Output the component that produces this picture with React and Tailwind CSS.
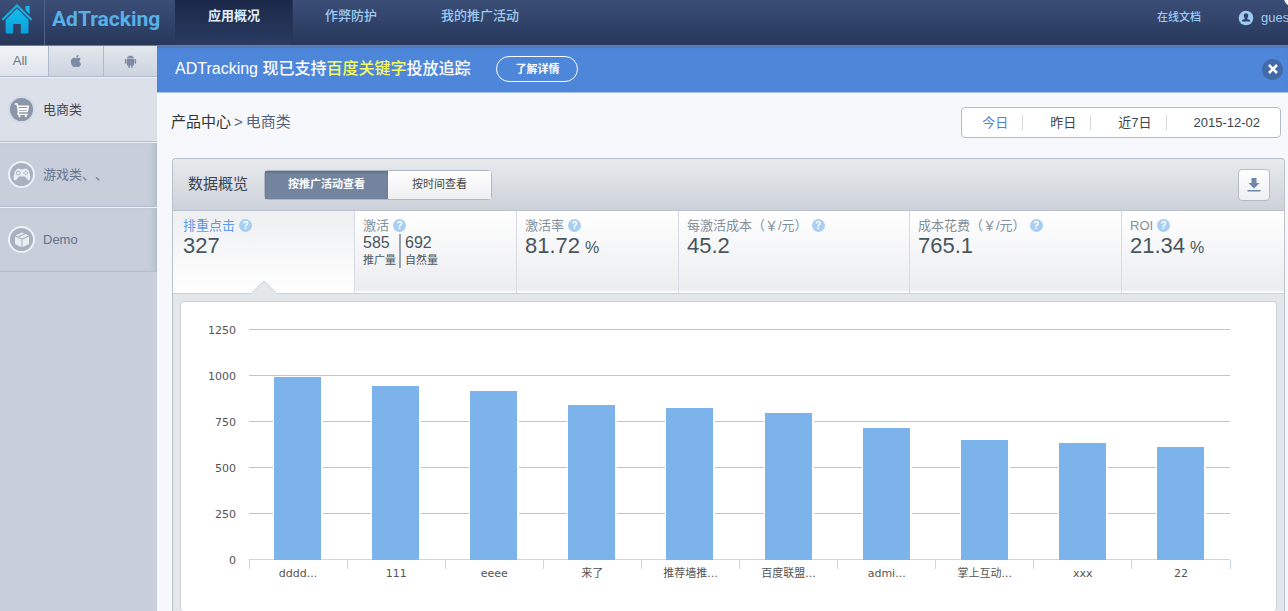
import React from "react";
import { FaApple } from "react-icons/fa";
import { AiFillAndroid } from "react-icons/ai";

const HomeIcon = () => (
  <svg viewBox="0 0 30 30" className="h-[30px] w-[30px]" aria-hidden="true">
    <defs>
      <linearGradient id="home" x1="0" y1="0" x2="0" y2="1">
        <stop offset="0" stopColor="#12bdea" />
        <stop offset="1" stopColor="#0b9fdc" />
      </linearGradient>
    </defs>
    <path d="M1 15.200L15 1.500L29 15.200" fill="none" stroke="#12b4e6" strokeWidth="2" strokeLinecap="round" />
    <path d="M23.500 2h4.200v8.200l-4.200-4z" fill="#12b9e8" />
    <path d="M15 4.500L26.500 15.700V28.500a1 1 0 0 1-1 1H18.800V20H11.200V29.500H4.700a1 1 0 0 1-1-1V15.700z" fill="url(#home)" />
  </svg>
);

const CartIcon = () => (
  <svg viewBox="0 0 16 16" className="h-4 w-4 shrink-0" fill="none" stroke="#fff" strokeLinecap="round" strokeLinejoin="round" aria-hidden="true">
    <path d="M1.200 2h2l1.300 7.500h8.700l1.200-5.300H4" strokeWidth="1.500" />
    <path d="M5 6h8.500l-.6 2H5.200z" fill="#fff" stroke="none" />
    <path d="M4.500 9.500L4 12.300h9.300" strokeWidth="1.300" />
    <circle cx="5.500" cy="14.200" r="1.100" fill="#fff" stroke="none" />
    <circle cx="11.800" cy="14.200" r="1.100" fill="#fff" stroke="none" />
  </svg>
);

const GamepadIcon = () => (
  <svg viewBox="0 0 18 14" className="h-3.5 w-[18px] shrink-0" aria-hidden="true">
    <path d="M4 1C6 .3 6.800 1.200 9 1.200S12 .3 14 1c2 .8 3.500 6.500 3.300 9.700-.1 1.800-2.100 2-3.200.5L12 8.600H6l-2.100 2.600C2.800 12.700.8 12.500.7 10.700.5 7.500 2 1.800 4 1z" fill="#e9edf4" />
    <circle cx="5.300" cy="5" r="1.900" fill="none" stroke="#a9b1c0" strokeWidth="1" />
    <g fill="#a9b1c0">
      <circle cx="12.700" cy="3.200" r=".8" />
      <circle cx="12.700" cy="6.600" r=".8" />
      <circle cx="11" cy="4.900" r=".8" />
      <circle cx="14.400" cy="4.900" r=".8" />
    </g>
  </svg>
);

const BoxIcon = () => (
  <svg viewBox="0 0 16 16" className="h-4 w-4 shrink-0" fill="#e9edf4" aria-hidden="true">
    <path d="M8 .6L10.300 1.600 3.800 4.600 1.500 3.600z" />
    <path d="M11.500 2.100L14.500 3.600 8 6.600 5 5.200z" />
    <path d="M1 4.600l6.500 3v7.600L1 12z" />
    <path d="M15 4.600l-6.500 3v7.600L15 12z" />
  </svg>
);

const UserIcon = () => (
  <svg viewBox="0 0 16 16" className="h-4 w-4 shrink-0" aria-hidden="true">
    <circle cx="8" cy="8" r="7.300" fill="#9dcbf3" />
    <path d="M8 3.200c1.500 0 2.300 1 2.300 2.400 0 1-.4 1.900-.9 2.400v.9l2.400 1c.5.300.5 1.500 0 1.500H4.200c-.5 0-.5-1.200 0-1.500l2.400-1V8c-.5-.5-.9-1.400-.9-2.400C5.700 4.200 6.500 3.200 8 3.200z" fill="#31446b" />
  </svg>
);

const DownloadIcon = () => (
  <svg viewBox="0 0 14 14" className="h-3.5 w-3.5" fill="#6f86ab" aria-hidden="true">
    <path d="M4.500 0h5v5h3L7 10.500 1.500 5h3z" />
    <path d="M.5 12h13v1.500H.5z" />
  </svg>
);

const navItems = [
  { label: "应用概况", active: true },
  { label: "作弊防护" },
  { label: "我的推广活动" },
];

const apps = [
  { label: "电商类", Icon: CartIcon, active: true },
  { label: "游戏类、、", Icon: GamepadIcon },
  { label: "Demo", Icon: BoxIcon },
];

const stats = [
  { label: "排重点击", value: "327", active: true },
  { label: "激活", split: [["585", "推广量"], ["692", "自然量"]] },
  { label: "激活率", value: "81.72", unit: "%" },
  { label: "每激活成本（￥/元）", value: "45.2" },
  { label: "成本花费（￥/元）", value: "765.1" },
  { label: "ROI", value: "21.34", unit: "%" },
];

const bars = [
  ["dddd...", 994],
  ["111", 946],
  ["eeee", 918],
  ["来了", 842],
  ["推荐墙推...", 828],
  ["百度联盟...", 799],
  ["admi...", 720],
  ["掌上互动...", 652],
  ["xxx", 636],
  ["22", 612],
];

function Header() {
  return (
    <header className="relative flex h-[46px] overflow-hidden border-b border-[#6f7f9b] bg-linear-to-b from-[#3b4e76] to-[#26375a]">
      <a href="#home" aria-label="首页" className="flex w-[45px] shrink-0 border-r border-[#4c6088] pl-0.5 pt-1">
        <HomeIcon />
      </a>
      <a
        href="#top"
        className="w-[130px] shrink-0 whitespace-nowrap pl-[7px] pt-1 font-['Roboto','Liberation_Sans',sans-serif] text-[21px] font-bold leading-[30px] text-[#58b0e8]"
      >
        AdTracking
      </a>
      <nav className="flex">
        {navItems.map((n) => (
          <a
            key={n.label}
            href="#nav"
            className={
              n.active
                ? "whitespace-nowrap border-r border-[#25355a] bg-linear-to-b from-[#1b2848] to-[#2a3b60] px-8 pt-1.5 text-[13px] font-bold leading-5 text-[#e3eefb] first:pl-[33px]"
                : "whitespace-nowrap px-8 pt-1.5 text-[13px] font-medium leading-5 text-[#9dcbf3]"
            }
          >
            {n.label}
          </a>
        ))}
      </nav>
      <div className="ml-auto flex h-[35px] items-center whitespace-nowrap text-[#9dcbf3]">
        <a href="#docs" className="mr-[37px] text-[11px] font-medium">
          在线文档
        </a>
        <a href="#account" className="flex w-[50px] items-center gap-[7px] text-[13px]">
          <UserIcon />
          gues
        </a>
      </div>
      <span className="absolute -right-3 -top-2.5 h-4 w-4 rounded-full bg-white" />
    </header>
  );
}

function Sidebar() {
  const tab = "flex items-center justify-center border-b border-l border-[#aebacb] bg-linear-to-b from-[#e3e7ee] to-[#cdd4de] text-[#7c8ba3]";
  return (
    <aside className="w-[157px] shrink-0 bg-[#c8cfda]">
      <div className="grid h-[31px] grid-cols-[48px_1fr_1fr]">
        <button className="border-b border-[#aebacb] bg-linear-to-b from-[#f2f4f8] to-[#dfe3eb] pr-2 text-[13px] text-[#6b788e]">
          All
        </button>
        <button aria-label="iOS" className={tab}>
          <FaApple size={14} />
        </button>
        <button aria-label="Android" className={tab}>
          <AiFillAndroid size={15} />
        </button>
      </div>
      {apps.map(({ label, Icon, active }) => (
        <a
          key={label}
          href="#app"
          className={
            "flex items-center gap-2 border-b border-t border-b-[#b3bdcd] border-t-[#eef1f6] pl-2 font-['Liberation_Sans','Noto_Sans_CJK_SC',sans-serif] text-[13px] " +
            (active
              ? "h-[65px] bg-[#dce0e9] text-[#46444f]"
              : "h-[65px] bg-[#c8cfda] text-[#64728d] shadow-[inset_-6px_0_6px_-4px_#aab4c4]")
          }
        >
          <span
            className={
              "flex h-[27px] w-[27px] shrink-0 items-center justify-center rounded-full border-2 " +
              (active ? "border-[#d3dbe9] bg-[#8c96a9]" : "border-[#eef1f7] bg-[#a9b1c0]")
            }
          >
            <Icon />
          </span>
          {label}
        </a>
      ))}
    </aside>
  );
}

function Banner() {
  return (
    <div className="flex h-[47px] items-center border-b border-[#a9c4ec] bg-[#4e86da] pl-[18px] pr-[5px] shadow-[inset_0_2px_1px_#5479b5]">
      <p className="whitespace-nowrap text-[16px] font-medium text-white">
        ADTracking 现已支持<span className="text-[#f5fb62]">百度关键字</span>投放追踪
      </p>
      <a
        href="#detail"
        className="ml-[26px] flex h-[26px] w-[82px] items-center justify-center rounded-full border border-white text-[11px] font-bold text-white"
      >
        了解详情
      </a>
      <button aria-label="关闭" className="ml-auto flex h-[21px] w-[21px] items-center justify-center rounded-full bg-[#4269a8]">
        <svg viewBox="0 0 10 10" className="h-2.5 w-2.5" stroke="#fff" strokeWidth="2.600" aria-hidden="true">
          <path d="M1 1l8 8M9 1l-8 8" />
        </svg>
      </button>
    </div>
  );
}

function DateRange() {
  const sep = "h-[15px] w-px bg-[#d3d8df]";
  return (
    <div className="flex h-[31px] items-center whitespace-nowrap rounded border border-[#b4bcc8] bg-white text-[13px] text-[#3c4450]">
      <button className="pl-5 pr-3.5 text-[#4a82d4]">今日</button>
      <span className={sep} />
      <button className="pl-[27px] pr-3.5">昨日</button>
      <span className={sep} />
      <button className="pl-[27px] pr-3.5">近7日</button>
      <span className={sep} />
      <button className="pl-[27px] pr-5">2015-12-02</button>
    </div>
  );
}

function Stat({ label, value, unit, split, active }) {
  return (
    <div
      className={
        "relative whitespace-nowrap border-l border-[#d5dae3] pl-2 pt-1.5 text-[#47565e] first:border-l-0 first:pl-2.5 " +
        (active
          ? "bg-linear-to-b from-[#eeeff1] to-white"
          : "bg-linear-to-b from-white to-[#ebecef] shadow-[inset_0_-2px_1px_#fafbfc]")
      }
    >
      <div className={"flex h-[17px] items-center gap-1 text-[13px] " + (active ? "text-[#5c9be6]" : "text-[#84909b]")}>
        {label}
        <span className="flex h-[13px] w-[13px] items-center justify-center rounded-full bg-[#a8cff1] text-[10px] font-bold leading-none text-white">
          ?
        </span>
      </div>
      {split ? (
        <div className="flex">
          {split.map(([n, t]) => (
            <div key={t} className="pr-[3px] last:border-l-2 last:border-[#9aa5b0] last:pl-1">
              <div className="text-base leading-[18px]">{n}</div>
              <div className="text-[11px] leading-4">{t}</div>
            </div>
          ))}
        </div>
      ) : (
        <div className="text-[22px] leading-6">
          {value}
          {unit && <span className="pl-[5px] text-base">{unit}</span>}
        </div>
      )}
      {active && (
        <svg viewBox="0 0 26 14" className="absolute -bottom-px left-1/2 h-3.5 w-[26px] -translate-x-1/2" aria-hidden="true">
          <path d="M0 14L13 1L26 14z" fill="#e3e7ea" />
          <path d="M0 13.500L13 1L26 13.500" fill="none" stroke="#cbd1da" />
        </svg>
      )}
    </div>
  );
}

function BarChart() {
  const left = 68;
  const base = 258;
  const step = 98.1;
  const scale = 46 / 250;
  return (
    <svg
      viewBox="0 0 1095 309"
      role="img"
      aria-label="排重点击"
      className="block w-full font-['DejaVu_Sans','Noto_Sans_CJK_SC',sans-serif] text-[11px]"
    >
      {[0, 250, 500, 750, 1000, 1250].map((v) => (
        <g key={v}>
          <line
            x1={left}
            x2={left + step * 10}
            y1={Math.round(base - v * scale) - 0.5}
            y2={Math.round(base - v * scale) - 0.5}
            stroke={v ? "#c4c4c4" : "#c8d6e6"}
          />
          <text x="55" y={base - v * scale + 4} textAnchor="end" fill="#555">
            {v}
          </text>
        </g>
      ))}
      {bars.map(([name, v], i) => (
        <g key={name}>
          <rect x={Math.floor(left + step * i + 24.5)} y={Math.round(base - v * scale) - 1} width="50" height={Math.round(v * scale)} fill="#fff" />
          <rect x={Math.floor(left + step * i + 25.5)} y={Math.round(base - v * scale)} width="47" height={Math.round(v * scale)} fill="#7cb3eb" />
          <text x={left + step * (i + 0.5)} y="275" textAnchor="middle" fill="#555">
            {name}
          </text>
        </g>
      ))}
      {Array.from({ length: 11 }, (_, i) => (
        <line key={i} x1={Math.floor(left + step * i) + 0.5} x2={Math.floor(left + step * i) + 0.5} y1={base} y2={base + 9} stroke="#c8d6e6" />
      ))}
    </svg>
  );
}

export default function App() {
  return (
    <div className="flex min-h-screen flex-col bg-[#f6f8fc] font-['Liberation_Sans','Noto_Sans_CJK_SC',sans-serif] [text-spacing-trim:space-all]">
      <Header />
      <div className="flex flex-1">
        <Sidebar />
        <main className="min-w-0 flex-1">
          <Banner />
          <div className="flex items-start justify-between pl-3.5 pr-[7px] pt-3.5">
            <p className="flex gap-[3px] pt-[3px] text-[15px] leading-6 text-[#333]">
              <a href="#center">产品中心</a>
              <span className="text-[#56617a]">&gt;</span>
              <span className="text-[#56617a]">电商类</span>
            </p>
            <DateRange />
          </div>
          <section className="ml-[15px] mr-[3px] mt-5 rounded-t border border-b-0 border-[#b9c1cc] bg-[#e3e7ea]">
            <div className="flex h-[52px] items-center rounded-t border-b border-[#b9c1cf] bg-linear-to-b from-[#e8eaec] to-[#cdd2da] pl-[15px] pr-3.5">
              <h2 className="text-[15px] text-[#3c4450]">数据概览</h2>
              <div className="ml-4 flex h-[30px] rounded-sm border border-[#aeb7c4] text-[11px]">
                <button className="bg-[#73849f] px-[23px] font-bold text-white shadow-[inset_0_2px_2px_#62718b]">
                  按推广活动查看
                </button>
                <button className="bg-linear-to-b from-white to-[#eeeff1] px-6 text-[#444]">按时间查看</button>
              </div>
              <button
                aria-label="下载"
                className="ml-auto flex h-8 w-8 items-center justify-center rounded-sm border border-[#b4bcc8] bg-linear-to-b from-white to-[#eeeff1]"
              >
                <DownloadIcon />
              </button>
            </div>
            <div className="grid h-[83px] grid-cols-[181fr_162fr_162fr_231fr_212fr_163fr] border-b border-[#cbd1da]">
              {stats.map((s) => (
                <Stat key={s.label} {...s} />
              ))}
            </div>
            <div className="px-[7px] pt-[7px]">
              <div className="rounded border border-b-0 border-[#cbd1da] bg-white">
                <BarChart />
              </div>
            </div>
          </section>
        </main>
      </div>
    </div>
  );
}
